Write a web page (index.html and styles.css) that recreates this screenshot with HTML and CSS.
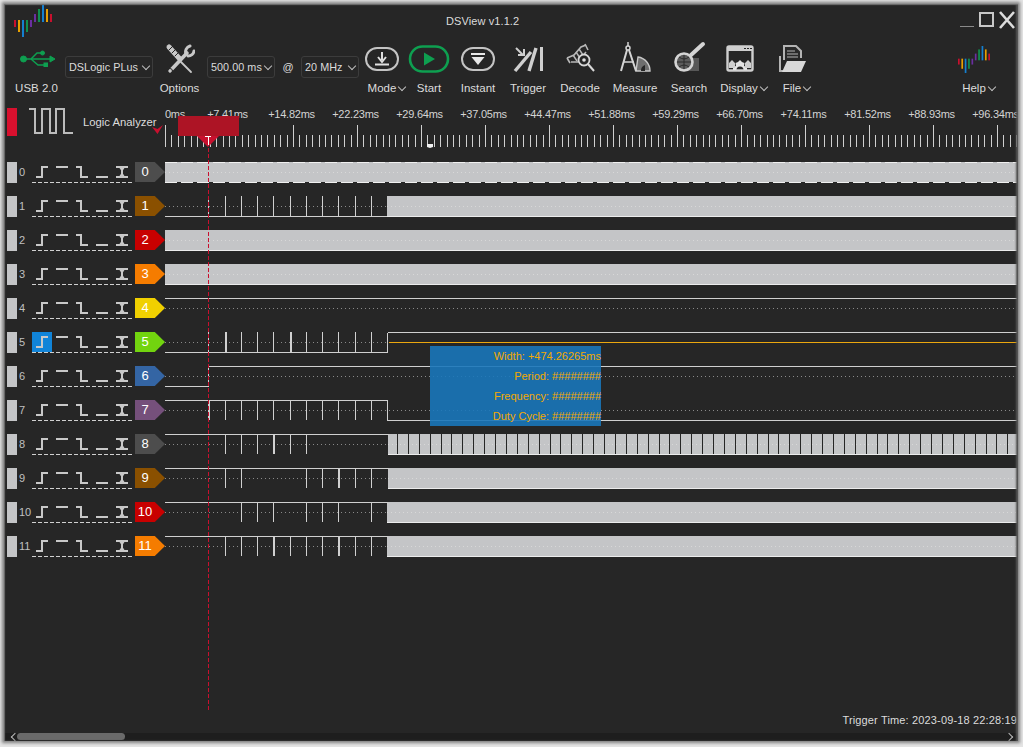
FILE: index.html
```html
<!DOCTYPE html>
<html lang="en">
<head>
  <meta charset="UTF-8" />
  <title>DSView v1.1.2</title>
  <link rel="stylesheet" href="styles.css">
</head>
<body>

  <svg class="defs" width="0" height="0">
    <symbol id="logo" viewBox="14 5 38 32">
      <rect x="14" y="20" width="2" height="7" fill="#c8102e"/>
      <rect x="18" y="20" width="2" height="12" fill="#e8a000"/>
      <rect x="22" y="20" width="2" height="17" fill="#1580d0"/>
      <rect x="26" y="20" width="2" height="12" fill="#109050"/>
      <rect x="30" y="20" width="2" height="7" fill="#6a2fa0"/>
      <rect x="34" y="14" width="2" height="8" fill="#6a2fa0"/>
      <rect x="38" y="9" width="2" height="13" fill="#109050"/>
      <rect x="42" y="5" width="2" height="17" fill="#1580d0"/>
      <rect x="46" y="9" width="2" height="13" fill="#e8a000"/>
      <rect x="50" y="14" width="2" height="8" fill="#c8102e"/>
    </symbol>
  </svg>

  <div class="window">

    <div class="titlebar">
      <svg class="logo-big"><use href="#logo"/></svg>
      <div class="title">DSView v1.1.2</div>
      <svg class="win-controls" width="60" height="20" viewBox="0 0 60 20">
        <path d="M3 16.5H17" stroke="#8a8a8a" fill="none"/>
        <rect x="23" y="3" width="13" height="13" stroke="#c8c8c8" stroke-width="2" fill="none"/>
        <path d="M43 2L57 18M57 2L43 18" stroke="#dcdcdc" stroke-width="2.6" fill="none"/>
      </svg>
    </div>

    <div class="toolbar">
      <div class="tool tool-usb">
        <svg class="icon" width="38" height="42" viewBox="0 0 38 42">
          <g fill="#0e9f50" stroke="#0e9f50">
            <circle cx="5.5" cy="21" r="3"/>
            <path d="M6 21H33" stroke-width="1.5"/>
            <path d="M32 18L37 21L32 24Z"/>
            <path d="M13 21L19 15H23M13 21L20 27H26" stroke-width="1.5" fill="none"/>
            <circle cx="24.5" cy="15" r="2"/>
            <rect x="26" y="25" width="3.5" height="3.5"/>
          </g>
        </svg>
        <span>USB 2.0</span>
      </div>

      <div class="combo combo-device">DSLogic PLus<i class="chev"></i></div>

      <div class="tool tool-options">
        <svg class="icon" width="30" height="42" viewBox="0 0 30 42">
          <g fill="none" stroke="#c8c8c8" stroke-linecap="round">
            <path d="M14 22L26 34" stroke-width="1.8"/>
            <path d="M4 9L14 20" stroke-width="5"/>
            <path d="M5 33L22 15" stroke-width="3.6"/>
            <path d="M21 16A6 6 0 0 1 25 8M23 18A6 6 0 0 0 29 13" stroke-width="3"/>
            <circle cx="5" cy="33" r="2.5" stroke="#262626" stroke-width="1"/>
            <path d="M4 12L8 8M7 15L11 11M10 18L14 14" stroke="#262626" stroke-width="1"/>
          </g>
        </svg>
        <span>Options</span>
      </div>

      <div class="combo combo-time">500.00 ms<i class="chev"></i></div>
      <div class="at">@</div>
      <div class="combo combo-rate">20 MHz<i class="chev"></i></div>

      <div class="tool tool-mode">
        <svg class="icon" width="36" height="42" viewBox="0 0 36 42">
          <rect x="2" y="10" width="32" height="22" rx="11" fill="none" stroke="#c4c4c4" stroke-width="2"/>
          <path d="M18 14V22M14 19L18 24L22 19" fill="none" stroke="#e0e0e0" stroke-width="2"/>
          <path d="M11 26.5H25" stroke="#e0e0e0" stroke-width="2"/>
        </svg>
        <span class="with-chev mode-label">Mode<i class="chev"></i></span>
      </div>

      <div class="tool tool-start">
        <svg class="icon" width="42" height="42" viewBox="0 0 42 42">
          <rect x="2" y="8.5" width="38" height="25" rx="12.5" fill="none" stroke="#0e9f50" stroke-width="2.6"/>
          <path d="M16 14.5L27 21L16 27.5Z" fill="#0e9f50"/>
        </svg>
        <span>Start</span>
      </div>

      <div class="tool tool-instant">
        <svg class="icon" width="36" height="42" viewBox="0 0 36 42">
          <rect x="2" y="10" width="32" height="22" rx="11" fill="none" stroke="#c4c4c4" stroke-width="2"/>
          <path d="M11 15H25V17H11Z" fill="#e8e8e8"/>
          <path d="M11.5 19H24.5L18 27Z" fill="#e8e8e8"/>
        </svg>
        <span>Instant</span>
      </div>

      <div class="tool tool-trigger">
        <svg class="icon" width="32" height="42" viewBox="0 0 32 42">
          <g fill="none" stroke="#cfcfcf">
            <path d="M29.5 9V33" stroke-width="3"/>
            <path d="M3 33L19 14" stroke-width="3.4"/>
            <path d="M17 33L24 10" stroke-width="3.4"/>
            <path d="M4 10L11 17" stroke-width="2"/>
            <path d="M6 17H12V11" stroke-width="2"/>
          </g>
        </svg>
        <span>Trigger</span>
      </div>

      <div class="tool tool-decode">
        <svg class="icon" width="30" height="42" viewBox="0 0 30 42">
          <g fill="none" stroke="#b8b8b8">
            <path d="M2 20L9 17L16 9L21 7M6 24L13 24L21 14" stroke-width="1.6"/>
            <path d="M8 17L12 23M11 14L15 20M14 11L18 17" stroke-width="1.4"/>
            <path d="M2 20L5 25M20 6L23 12" stroke-width="1.6"/>
            <circle cx="19" cy="22" r="5.5" fill="#262626" stroke="#d8d8d8" stroke-width="1.8"/>
            <path d="M23 26L29 33" stroke="#d8d8d8" stroke-width="2"/>
          </g>
          <circle cx="19" cy="22" r="1.8" fill="#e0e0e0"/>
        </svg>
        <span>Decode</span>
      </div>

      <div class="tool tool-measure">
        <svg class="icon" width="32" height="42" viewBox="0 0 32 42">
          <path d="M17 33H31A14 14 0 0 0 19 19Z" fill="#6e6e6e" stroke="#c8c8c8" stroke-width="1.4"/>
          <path d="M22 33A6 6 0 0 1 26 27L26 33Z" fill="#262626"/>
          <g fill="none" stroke="#d4d4d4">
            <circle cx="9" cy="10" r="2" stroke-width="1.5"/>
            <path d="M9 4V8" stroke-width="1.5"/>
            <path d="M8 12L2 33M10 12L17 33" stroke-width="2"/>
            <path d="M4 24H15" stroke-width="1.5"/>
          </g>
        </svg>
        <span>Measure</span>
      </div>

      <div class="tool tool-search">
        <svg class="icon" width="34" height="42" viewBox="0 0 34 42">
          <rect x="14" y="20" width="13" height="13" fill="#585858"/>
          <circle cx="12" cy="24" r="8.5" fill="#5c5c5c" stroke="#d4d4d4" stroke-width="2.6"/>
          <path d="M5 24H19M12 17V31M7 19Q12 23 17 19M7 29Q12 25 17 29" fill="none" stroke="#2a2a2a"/>
          <path d="M19 17L31 6" stroke="#d4d4d4" stroke-width="4" stroke-linecap="round"/>
        </svg>
        <span>Search</span>
      </div>

      <div class="tool tool-display">
        <svg class="icon shift-left" width="30" height="42" viewBox="0 0 30 42">
          <rect x="2.5" y="8.5" width="25" height="24" rx="1.5" fill="none" stroke="#cfcfcf" stroke-width="2.4"/>
          <path d="M2 9H28V13H2Z" fill="#cfcfcf"/>
          <path d="M19 10.5H21M22 10.5H24M25 10.5H27" stroke="#262626"/>
          <path d="M8 32V29L11 28L10.5 25L13 24L15 22L17 24L19.5 25L19 28L22 29V32H18.5A3.5 3.5 0 0 0 11.5 32Z" fill="#e4e4e4"/>
          <path d="M4 25L7 22L10 25V30H4ZM26 25L23 22L20 25V30H26Z" fill="#cfcfcf"/>
        </svg>
        <span class="with-chev">Display<i class="chev"></i></span>
      </div>

      <div class="tool tool-file">
        <svg class="icon shift-left" width="30" height="42" viewBox="0 0 30 42">
          <path d="M6 22V8H18L23 13V20" fill="#2a2a2a" stroke="#b4b4b4" stroke-width="2"/>
          <path d="M9 13H17M9 16H20M9 19H20" stroke="#b4b4b4"/>
          <path d="M2 18V33H5" fill="none" stroke="#b4b4b4" stroke-width="2"/>
          <path d="M4 34L9 23H28L23 34Z" fill="#d8d8d8"/>
        </svg>
        <span class="with-chev">File <i class="chev"></i></span>
      </div>

      <div class="tool tool-help">
        <svg class="icon logo-small"><use href="#logo"/></svg>
        <span class="with-chev">Help<i class="chev"></i></span>
      </div>
    </div>

    <div class="view-header">
      <div class="gate-red"></div>
      <svg class="mode-icon" width="46" height="28" viewBox="0 0 46 28">
        <path d="M0 1H6V25H13V1H21V25H27V1H35V25H44" fill="none" stroke="#bcbcbc" stroke-width="2"/>
      </svg>
      <div class="mode-name">Logic Analyzer</div>
      <svg class="drop-mark" width="11" height="9" viewBox="0 0 11 9">
        <path d="M0 2L5.5 9L11 0L5.5 4Z" fill="#c8102e"/>
      </svg>
      <svg class="ruler" id="ruler" width="853" height="55"></svg>
    </div>

    <div class="channels" id="channels"></div>

    <div class="trigger-time">Trigger Time: 2023-09-18 22:28:19</div>

    <div class="scrollbar">
      <i class="arrow arrow-left"></i>
      <div class="thumb"></div>
      <i class="arrow arrow-right"></i>
    </div>

    <!-- Trigger cursor, runs over the ruler and all the channels -->
    <div class="cursor-line"></div>

    <!-- Measure popup -->
    <div class="measure-tip">
      <div>Width: +474.26265ms</div>
      <div>Period: ########</div>
      <div>Frequency: ########</div>
      <div>Duty Cycle: ########</div>
    </div>

    <div class="window-edge"></div>
  </div>

  <script src="app.js"></script>
</body>
</html>
```

FILE: styles.css
```css
html, body {
  margin: 0;
  height: 100%;
  background: #e4e4e4;
  overflow: hidden;
}
body {
  font-family: 'Liberation Sans', Arial, sans-serif;
  font-size: 11.5px;
  color: #dcdcdc;
}
.defs {
  position: absolute;
}

.window {
  position: absolute;
  left: 4px;
  top: 4px;
  width: 1014px;
  height: 737px;
  background: #262626;
  box-shadow: 0 0 3px 2px #808080;
  display: flex;
  flex-direction: column;
  overflow: hidden;
}
.window-edge {
  position: absolute;
  inset: 0;
  pointer-events: none;
  box-shadow: inset 1px 1px 1px #707070, inset -2px 0 2px #555;
}

/* Title bar */
.titlebar {
  height: 32px;
  display: flex;
  flex-shrink: 0;
}
.logo-big {
  width: 38px;
  height: 32px;
  margin: 1px 0 0 10px;
}
.title {
  margin: 10px 0 0 394px;
  letter-spacing: 0.1px;
  font-size: 11px;
  line-height: 14px;
}
.win-controls {
  margin: 6px 1px 0 auto;
}

/* Toolbar */
.toolbar {
  height: 64px;
  display: flex;
  flex-shrink: 0;
}
.tool {
  display: flex;
  flex-direction: column;
  align-items: center;
  margin-top: 2px;
}
.tool span {
  margin-top: 0;
  line-height: 16px;
  white-space: nowrap;
}
.icon {
  flex-shrink: 0;
}
.shift-left {
  position: relative;
  left: -4px;
}
.mode-label {
  position: relative;
  left: 5px;
}
.tool-usb { width: 53px; margin-left: 6px; }
.tool-options { width: 53px; }
.tool-mode { width: 46px; }
.tool-start { width: 48px; }
.tool-instant { width: 50px; }
.tool-trigger { width: 50px; }
.tool-decode { width: 54px; }
.tool-measure { width: 56px; }
.tool-search { width: 52px; }
.tool-display { width: 58px; }
.tool-file { width: 48px; }
.tool-help { width: 48px; margin-left: auto; margin-right: 15px; }
.logo-small {
  width: 32px;
  height: 27px;
  margin-top: 8px;
  margin-bottom: 7px;
  margin-right: 10px;
}
.with-chev {
  display: flex;
  align-items: center;
  gap: 1px;
}

.chev {
  display: inline-block;
  width: 5px;
  height: 5px;
  margin: -3px 1px 0 2px;
  border-right: 1px solid #bdbdbd;
  border-bottom: 1px solid #bdbdbd;
  transform: rotate(45deg);
}

.combo {
  height: 20px;
  margin-top: 20px;
  padding-left: 3px;
  border: 1px solid #3c3c3c;
  border-radius: 3px;
  display: flex;
  align-items: center;
  justify-content: space-between;
  padding-right: 2px;
  font-size: 10.8px;
  letter-spacing: 0.05px;
  white-space: nowrap;
}
.combo-device { width: 81px; margin-left: 2px; }
.combo-time { width: 61px; margin-left: 1px; }
.combo-rate { width: 51px; }
.at {
  width: 26px;
  margin-top: 20px;
  line-height: 22px;
  text-align: center;
  font-size: 11px;
}

/* Row with the mode and the time ruler */
.view-header {
  position: relative;
  height: 55px;
  display: flex;
  flex-shrink: 0;
}
.gate-red {
  width: 10px;
  height: 28px;
  margin: 8px 0 0 3px;
  background: #d8102e;
}
.mode-icon {
  margin: 8px 0 0 12px;
}
.mode-name {
  width: 82px;
  margin: 15px 0 0 8px;
  font-size: 11.3px;
  line-height: 14px;
  white-space: nowrap;
}
.drop-mark {
  position: absolute;
  left: 148px;
  top: 25px;
}
.ruler {
  flex-shrink: 0;
  font-size: 11px;
  letter-spacing: -0.25px;
}
.ruler text {
  fill: #d4d4d4;
}

/* Channels */
.channels {
  padding-top: 7px;
  height: 550px;
  flex-shrink: 0;
}
.channel {
  height: 21px;
  margin-bottom: 13px;
  display: flex;
  align-items: flex-start;
}
.gate {
  width: 10px;
  height: 21px;
  margin-left: 3px;
  background: #c4c5c7;
  flex-shrink: 0;
}
.ch-num {
  width: 13px;
  margin-left: 2px;
  font-size: 11px;
  line-height: 21px;
  color: #c0c0c0;
  white-space: nowrap;
}
.edges {
  flex-shrink: 0;
}
.tag {
  width: 30px;
  height: 20px;
  margin-left: 3px;
  padding-right: 10px;
  box-sizing: border-box;
  flex-shrink: 0;
  font-size: 13px;
  line-height: 20px;
  text-align: center;
  color: #fff;
  clip-path: polygon(0 0, 66% 0, 100% 50%, 66% 100%, 0 100%);
}
.wave {
  flex-shrink: 0;
}

/* Footer */
.trigger-time {
  height: 16px;
  padding-right: 1px;
  text-align: right;
  font-size: 11px;
  line-height: 16px;
  letter-spacing: 0.15px;
}
.scrollbar {
  position: relative;
  margin-top: 5px;
  height: 8px;
  background: #1e1e1e;
}
.thumb {
  margin-left: 13px;
  width: 108px;
  height: 7px;
  border-radius: 4px;
  background: #6a6a6a;
}
.arrow {
  position: absolute;
  top: 1px;
  width: 5px;
  height: 5px;
  border-left: 1px solid #bbb;
  border-bottom: 1px solid #bbb;
}
.arrow-left {
  left: 8px;
  transform: rotate(45deg);
}
.arrow-right {
  right: 6px;
  transform: rotate(225deg);
}

/* Overlays */
.cursor-line {
  position: absolute;
  left: 204px;
  top: 144px;
  width: 1px;
  height: 562px;
  background: repeating-linear-gradient(to bottom, #c8102e 0 4px, transparent 4px 6px);
}
.measure-tip {
  position: absolute;
  left: 426px;
  top: 342px;
  width: 171px;
  height: 80px;
  background: rgba(25, 119, 186, 0.9);
  color: #f2a900;
  font-size: 11px;
  text-align: right;
}
.measure-tip div {
  height: 20px;
  line-height: 20px;
}
```

FILE: app.js
```js
const WAVE_X = 165;
const WAVE_W = 852;
const colors = ['#4d4d4d', '#8a5000', '#c80000', '#f57c00', '#f0d000', '#72d40f', '#3465a4', '#75507b'];

// edge positions, in page pixels. thick = a double edge
const channels = [
  { fillFrom: 165, dashed: true },
  { level: 'low', ticks: [208, 225, 241, 257, 273, 290, 306, 322, 338, 355, 371], fillFrom: 387 },
  { fillFrom: 165 },
  { fillFrom: 165 },
  { level: 'high' },
  { level: 'low', ticks: [208, 241, 257, 273, 306, 322, 338, 355, 371], thick: [225, 290], stepUp: 387, selected: true },
  { level: 'low', stepUp: 208 },
  { level: 'high', ticks: [225, 241, 257, 273, 290, 306, 322, 338, 355, 371], thick: [208], stepDown: 387 },
  { level: 'high', ticks: [225, 241, 257, 290, 306], thick: [273], fillFrom: 388, stripes: true },
  { level: 'high', ticks: [225, 241, 306, 322, 355, 371], thick: [338], fillFrom: 388 },
  { level: 'high', ticks: [241, 257, 273, 306, 322, 338, 371], fillFrom: 387 },
  { level: 'high', ticks: [225, 241, 257, 290, 306, 322, 355, 371], thick: [273, 338], fillFrom: 387 }
];

function line(x1, y1, x2, y2, color, extra) {
  return `<line x1="${x1}" y1="${y1}" x2="${x2}" y2="${y2}" stroke="${color}" ${extra || ''}/>`;
}

function edgeIcons(ch) {
  const c = '#c8c8c8';
  const s = 'stroke-width="2"';
  let out = '';
  if (ch.selected) out += '<rect x="0" y="0" width="20" height="20" fill="#1184d8"/>';
  out += `<path d="M4 15H10V5H16" fill="none" stroke="${c}" ${s}/>`;
  out += `<path d="M24 5H36" fill="none" stroke="${c}" ${s}/>`;
  out += `<path d="M44 5H49V15H56" fill="none" stroke="${c}" ${s}/>`;
  out += `<path d="M64 15H76" fill="none" stroke="${c}" ${s}/>`;
  out += `<path d="M84 5H96M84 15H96M88 5L90 8V12L88 15M92 5L90 8V12L92 15" fill="none" stroke="${c}" ${s}/>`;
  out += line(0, 20.5, 100, 20.5, '#d0d0d0', 'stroke-dasharray="4 2"');
  return `<svg class="edges" width="100" height="21">${out}</svg>`;
}

function waveform(ch) {
  const hi = 0.5;
  const lo = 20.5;
  const mid = 10.5;
  const wire = '#d0d0d0';
  const dots = 'stroke-dasharray="1 3"';
  const px = x => x - WAVE_X + 0.5;
  const end = WAVE_W;
  let out = '';

  const fillX = ch.fillFrom ? ch.fillFrom - WAVE_X : end;
  const flatEnd = ch.stepUp || ch.stepDown || (ch.fillFrom || 1018);
  const lineY = ch.level === 'low' ? lo : hi;

  if (ch.fillFrom) {
    out += `<rect x="${fillX}" y="0" width="${end - fillX}" height="20" fill="#c4c5c7"/>`;
  }

  // dotted centre line
  if (ch.stepUp === 387) {
    out += line(0, mid, px(387), mid, '#8a8a8a', dots);
    out += line(px(388), mid, end, mid, '#eba70f');
  } else {
    out += line(0, mid, fillX, mid, '#8a8a8a', dots);
    if (fillX < end) out += line(fillX, mid, end, mid, '#d8d8d8', dots);
  }

  if (ch.level) out += line(0, lineY, Math.min(px(flatEnd), end), lineY, wire);

  (ch.ticks || []).forEach(x => { out += line(px(x), 0, px(x), 20, wire); });
  (ch.thick || []).forEach(x => { out += line(px(x), 0, px(x), 20, wire, 'stroke-width="2"'); });

  if (ch.stepUp) {
    out += line(px(ch.stepUp), lo, px(ch.stepUp), hi, wire);
    out += line(px(ch.stepUp), hi, end, hi, wire);
  }
  if (ch.stepDown) {
    out += line(px(ch.stepDown), hi, px(ch.stepDown), lo, wire);
    out += line(px(ch.stepDown), lo, end, lo, wire);
  }

  if (ch.stripes) {
    for (let x = 397; x < 1017; x += 10.9) {
      const gx = Math.round(x) - WAVE_X + 0.5;
      out += line(gx, 0, gx, 20, '#262626');
    }
  }

  if (ch.dashed) {
    out += line(0, hi, end, hi, '#f0f0f0', 'stroke-dasharray="12 4"');
    out += line(0, lo, end, lo, '#f0f0f0', 'stroke-dasharray="12 4"');
  } else if (ch.fillFrom) {
    out += line(fillX, lo, end, lo, '#ececec');
  }

  return `<svg class="wave" width="${WAVE_W}" height="21" shape-rendering="crispEdges">${out}</svg>`;
}

document.getElementById('channels').innerHTML = channels.map((ch, i) => `
  <div class="channel">
    <div class="gate"></div>
    <div class="ch-num">${i}</div>
    ${edgeIcons(ch)}
    <div class="tag" style="background:${colors[i % colors.length]}">${i}</div>
    ${waveform(ch)}
  </div>`).join('');

// Ruler
const times = ['+7.41', '+14.82', '+22.23', '+29.64', '+37.05', '+44.47', '+51.88', '+59.29',
  '+66.70', '+74.11', '+81.52', '+88.93', '+96.34'];
let ruler = '<text x="0" y="18">0ms</text>';
times.forEach((t, i) => {
  ruler += `<text x="${62.5 + 64 * i}" y="18" text-anchor="middle">${t}ms</text>`;
});

// small ticks every 6.4px, a tall one every 10th
let ticks = '';
for (let i = 0; i * 6.4 < WAVE_W; i++) {
  const x = Math.round(i * 6.4) + 0.5;
  ticks += `M${x} ${i % 10 === 0 ? 25 : 35}V47`;
}
ruler += `<path d="${ticks}" stroke="#d0d0d0" fill="none" shape-rendering="crispEdges"/>`;

// trigger marker
ruler += '<rect x="13" y="16" width="61" height="20" fill="#ad1425"/>';
ruler += '<path d="M32 36H54L43 47Z" fill="#c8102e"/>';
ruler += '<path d="M40 36.5H46M43 36.5V45" stroke="#fff" fill="none" shape-rendering="crispEdges"/>';
// last sample marker
ruler += '<path d="M262 44H268V47L265 48L262 47Z" fill="#f0f0f0"/>';
document.getElementById('ruler').innerHTML = ruler;
```
